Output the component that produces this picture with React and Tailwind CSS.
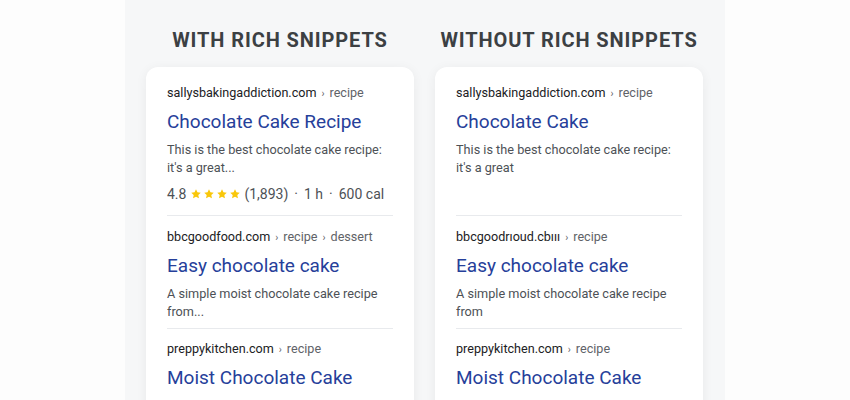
const cards = {
  with: [
    {
      domain: 'sallysbakingaddiction.com',
      path: ['recipe'],
      title: 'Chocolate Cake Recipe',
      desc: ["This is the best chocolate cake recipe:", "it's a great..."],
      rating: true,
    },
    {
      domain: 'bbcgoodfood.com',
      path: ['recipe', 'dessert'],
      title: 'Easy chocolate cake',
      desc: ['A simple moist chocolate cake recipe', 'from...'],
    },
    {
      domain: 'preppykitchen.com',
      path: ['recipe'],
      title: 'Moist Chocolate Cake',
      desc: ['This moist homemade chocolate cake', 'recipe is easy'],
    },
  ],
  without: [
    {
      domain: 'sallysbakingaddiction.com',
      path: ['recipe'],
      title: 'Chocolate Cake',
      desc: ["This is the best chocolate cake recipe:", "it's a great"],
      rating: false,
    },
    {
      domain: 'bbcgoodrıoud.cbııı',
      path: ['recipe'],
      title: 'Easy chocolate cake',
      desc: ['A simple moist chocolate cake recipe', 'from'],
    },
    {
      domain: 'preppykitchen.com',
      path: ['recipe'],
      title: 'Moist Chocolate Cake',
      desc: ['This moist homemade chocolate cake', 'recipe is easy'],
    },
  ],
}

function Star() {
  return (
    <svg viewBox="0 0 24 24" className="w-[12px] h-[12px]" fill="#f9c70a">
      <path d="M12 2.5l2.9 6.1 6.6.8-4.9 4.6 1.3 6.6L12 17.3l-5.9 3.3 1.3-6.6L2.5 9.4l6.6-.8z" />
    </svg>
  )
}

function Result({ item, index }) {
  const first = index === 0
  return (
    <div className={first ? '' : 'border-t border-[#e8eaed]'}>
      <div
        className={`${first ? 'pt-[17px]' : index === 1 ? 'pt-[12px]' : 'pt-[11px]'} text-[12.6px] leading-[18px] text-[#202124] whitespace-nowrap`}
      >
        {item.domain}
        {item.path.map((p) => (
          <span key={p} className="text-[#5f6368]">
            <span className="mx-[5px] text-[10px]">›</span>
            {p}
          </span>
        ))}
      </div>
      <div className="mt-[6px] text-[19px] leading-[26px] text-[#26409a] whitespace-nowrap">
        {item.title}
      </div>
      <div
        className={`mt-[6px] text-[12.7px] ${first ? 'leading-[18px]' : 'leading-[17.5px]'} text-[#4d5156]`}
      >
        {item.desc.map((d) => (
          <div key={d} className="whitespace-nowrap">{d}</div>
        ))}
      </div>
      {first ? (
        <div className="mt-[7px] mb-[11px] h-[20px] flex items-center text-[14px] text-[#4d5156] whitespace-nowrap">
          {item.rating && (
            <>
              <span>4.8</span>
              <span className="flex items-center gap-[1px] ml-[4px] mr-[3px]">
                <Star />
                <Star />
                <Star />
                <Star />
              </span>
              <span>(1,893)</span>
              <span className="mx-[6px]">·</span>
              <span>1 h</span>
              <span className="mx-[6px]">·</span>
              <span>600 cal</span>
            </>
          )}
        </div>
      ) : (
        <div className="h-[8px]" />
      )}
    </div>
  )
}

function Column({ heading, items }) {
  return (
    <div className="flex flex-col w-[268px]">
      <h2 className="shrink-0 h-[39px] mt-[20px] mb-[8px] flex items-center justify-center text-[20px] font-bold tracking-[0.045em] text-[#3c4043] whitespace-nowrap">
        {heading}
      </h2>
      <div className="shrink-0 bg-white rounded-[12px] shadow-[0_2px_12px_rgba(0,0,0,0.06)] px-[21px] h-[400px]">
        {items.map((item, i) => (
          <Result key={i} item={item} index={i} />
        ))}
      </div>
    </div>
  )
}

export default function App() {
  return (
    <div
      className="w-[850px] h-[400px] overflow-hidden bg-[#fdfdfd] flex"
      style={{ fontFamily: 'Roboto, "Liberation Sans", Arial, sans-serif' }}
    >
      <div className="ml-[125px] w-[600px] h-full bg-[#f6f7f8] flex gap-[21px] px-[21px]">
        <Column heading="WITH RICH SNIPPETS" items={cards.with} />
        <Column heading="WITHOUT RICH SNIPPETS" items={cards.without} />
      </div>
    </div>
  )
}
